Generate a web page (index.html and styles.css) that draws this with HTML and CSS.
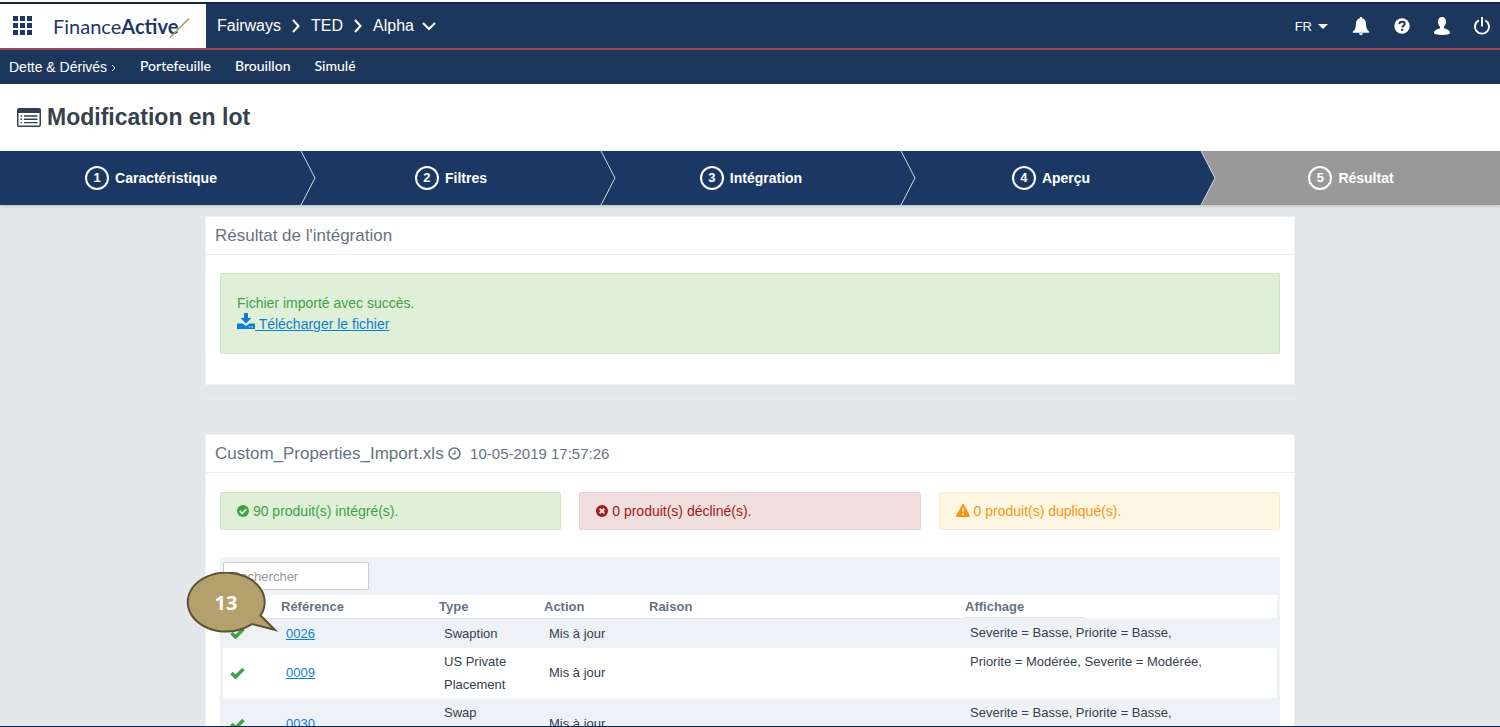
FILE: index.html
```html
<!DOCTYPE html>
<html lang="fr">
<head>
    <meta charset="UTF-8">
    <meta name="viewport" content="width=device-width, initial-scale=1.0">
    <title>Modification en lot</title>
    <link rel="stylesheet" href="styles.css">
</head>
<body>
    <!-- Barre principale -->
    <header class="topbar">
        <div class="brand">
            <button type="button" class="icon-btn" aria-label="Applications">
                <svg width="20" height="20" viewBox="0 0 20 20" fill="#1c3866">
                    <path d="M0 0h5v5H0zM7 0h5v5H7zM14 0h5v5h-5zM0 7h5v5H0zM7 7h5v5H7zM14 7h5v5h-5zM0 14h5v5H0zM7 14h5v5H7zM14 14h5v5h-5z"/>
                </svg>
            </button>
            <a href="#" class="logo">Finance<b>Active</b><svg class="slash" width="22" height="22" viewBox="0 0 22 22"><path d="M1 20.500L20 1.500" stroke="#b3a06c" stroke-width="1.700"/></svg></a>
        </div>
        <nav class="crumbs">
            <a href="#">Fairways</a>
            <svg width="8" height="14" viewBox="0 0 8 14"><path d="M1 1l5.500 6L1 13"/></svg>
            <a href="#">TED</a>
            <svg width="8" height="14" viewBox="0 0 8 14"><path d="M1 1l5.500 6L1 13"/></svg>
            <a href="#">Alpha</a>
            <svg class="down" width="14" height="10" viewBox="0 0 14 10"><path d="M1 2l6 6 6-6"/></svg>
        </nav>
        <div class="tools">
            <button type="button" class="lang">FR <span class="caret"></span></button>
            <button type="button" class="icon-btn" aria-label="Notifications">
                <svg width="18" height="18" viewBox="0 0 18 18" fill="#fff"><path d="M9 0c.8 0 1.200.5 1.200 1.200C12.800 1.800 14 4 14 6.500c0 4 1 6.500 3.200 8.200v1H.8v-1C3 13 4 10.500 4 6.500 4 4 5.200 1.800 7.800 1.200 7.800.5 8.200 0 9 0zM7 16.200h4c0 1.100-.9 1.800-2 1.800s-2-.7-2-1.800z"/></svg>
            </button>
            <button type="button" class="icon-btn" aria-label="Aide">
                <svg width="16" height="16" viewBox="0 0 16 16"><circle cx="8" cy="8" r="7.700" fill="#fff"/><path d="M5.400 6.100C5.500 4.500 6.500 3.700 8 3.700s2.700.9 2.700 2.200c0 1.800-2.500 1.800-2.500 3.600" fill="none" stroke="#1c3659" stroke-width="2"/><path d="M7.100 10.800h2.200v2H7.100z" fill="#1c3659"/></svg>
            </button>
            <button type="button" class="icon-btn" aria-label="Profil">
                <svg width="16" height="18" viewBox="0 0 16 18" fill="#fff"><path d="M8 0c2.500 0 4 1.900 4 4.800 0 2-.8 3.900-2 4.900v1.500c3.200 1 6 2.300 6 4.600 0 1.500-3.600 2.200-8 2.200s-8-.7-8-2.200c0-2.300 2.800-3.600 6-4.600V9.700C4.800 8.700 4 6.800 4 4.800 4 1.900 5.500 0 8 0z"/></svg>
            </button>
            <button type="button" class="icon-btn" aria-label="Déconnexion">
                <svg width="16" height="18" viewBox="0 0 16 18" fill="none" stroke="#fff" stroke-width="1.900"><path d="M4.800 3.400a7 7 0 1 0 6.400 0M8 0v9.500"/></svg>
            </button>
        </div>
    </header>

    <nav class="subnav">
        <a href="#" class="section">Dette &amp; Dérivés <svg width="5" height="8" viewBox="0 0 5 8"><path d="M1 1l3 3-3 3"/></svg></a>
        <a href="#">Portefeuille</a>
        <a href="#">Brouillon</a>
        <a href="#">Simulé</a>
    </nav>

    <div class="title">
        <svg width="24" height="19" viewBox="0 0 24 19"><path d="M2 0h20a2 2 0 0 1 2 2v15a2 2 0 0 1-2 2H2a2 2 0 0 1-2-2V2a2 2 0 0 1 2-2zM1.500 5v12c0 .3.200.5.500.5h20c.3 0 .5-.2.500-.5V5z" fill="#36414f" fill-rule="evenodd"/><path d="M3.500 8h1.500M3.500 11.300h1.500M3.500 14.600h1.500M7 8h13.500M7 11.300h13.500M7 14.600h13.500" stroke="#36414f" stroke-width="1.400"/></svg>
        <h1>Modification en lot</h1>
    </div>

    <!-- Étapes -->
    <ol class="steps">
        <li><span class="num">1</span>Caractéristique<svg class="arrow" width="16" height="54" viewBox="0 0 16 54"><path d="M0 0h1l14 27L1 54H0z" fill="#1b3864"/><path d="M1 0l14 27L1 54" fill="none" stroke="#d5dae2"/></svg></li>
        <li><span class="num">2</span>Filtres<svg class="arrow" width="16" height="54" viewBox="0 0 16 54"><path d="M0 0h1l14 27L1 54H0z" fill="#1b3864"/><path d="M1 0l14 27L1 54" fill="none" stroke="#d5dae2"/></svg></li>
        <li><span class="num">3</span>Intégration<svg class="arrow" width="16" height="54" viewBox="0 0 16 54"><path d="M0 0h1l14 27L1 54H0z" fill="#1b3864"/><path d="M1 0l14 27L1 54" fill="none" stroke="#d5dae2"/></svg></li>
        <li><span class="num">4</span>Aperçu<svg class="arrow" width="16" height="54" viewBox="0 0 16 54"><path d="M0 0h1l14 27L1 54H0z" fill="#1b3864"/><path d="M1 0l14 27L1 54" fill="none" stroke="#d5dae2"/></svg></li>
        <li class="current"><span class="num">5</span>Résultat</li>
    </ol>

    <main class="container">
        <section class="card">
            <h2>Résultat de l'intégration</h2>
            <div class="card-body">
                <div class="alert success big">
                    <p>Fichier importé avec succès.</p>
                    <a href="#" class="download"><svg width="18" height="16" viewBox="0 0 18 16" fill="#0d7fd2"><path d="M7 0h4v5h3.500L9 10.500 3.500 5H7zM0 10.500h5.500L9 13l3.500-2.500H18V16H0z"/><path d="M12 13.200h1.300v1.200H12zM14.700 13.200H16v1.200h-1.300z" fill="#dfefd8"/></svg> Télécharger le fichier</a>
                </div>
            </div>
        </section>

        <hr>

        <section class="card">
            <h2>Custom_Properties_Import.xls
                <svg width="13" height="13" viewBox="0 0 13 13" fill="none" stroke="#687282" stroke-width="1.500"><circle cx="6.500" cy="6.500" r="5.500"/><path d="M7 3.200v3.600H4.300" stroke-width="1.200"/></svg>
                <small>10-05-2019 17:57:26</small>
            </h2>
            <div class="card-body">
                <div class="summary">
                    <div class="alert success">
                        <svg width="12" height="12" viewBox="0 0 12 12"><circle cx="6" cy="6" r="6" fill="#3fa244"/><path d="M2.800 6l2.400 2.400 4.200-4.200" fill="none" stroke="#dfefd8" stroke-width="1.800"/></svg>
                        90 produit(s) intégré(s).
                    </div>
                    <div class="alert danger">
                        <svg width="12" height="12" viewBox="0 0 12 12"><circle cx="6" cy="6" r="6" fill="#9d1c1c"/><path d="M3.700 3.700l4.600 4.600M8.300 3.700L3.700 8.300" stroke="#f1dede" stroke-width="2"/></svg>
                        0 produit(s) décliné(s).
                    </div>
                    <div class="alert warning">
                        <svg width="14" height="13" viewBox="0 0 14 13"><path d="M7 0c.5 0 .8.2 1 .6l5.800 10.800c.4.800 0 1.600-.9 1.600H1.100c-.9 0-1.300-.8-.9-1.600L6 .6C6.200.2 6.500 0 7 0z" fill="#fb9610"/><path d="M6 4.200h2l-.3 4H6.300zM6.100 9.300h1.800V11H6.100z" fill="#fdf6e2"/></svg>
                        0 produit(s) dupliqué(s).
                    </div>
                </div>

                <div class="results">
                    <input type="text" placeholder="Rechercher" aria-label="Rechercher">
                    <table>
                        <colgroup>
                            <col class="c-state"><col class="c-ref"><col class="c-type"><col class="c-action"><col class="c-reason"><col>
                        </colgroup>
                        <thead>
                            <tr>
                                <th></th>
                                <th>Référence</th>
                                <th>Type</th>
                                <th>Action</th>
                                <th>Raison</th>
                                <th class="last"><div>Affichage</div></th>
                            </tr>
                        </thead>
                        <tbody>
                            <tr>
                                <td class="state"><svg width="15" height="12" viewBox="0 0 15 12"><path d="M1.500 6l4 4L13.500 2" /></svg></td>
                                <td><a href="#">0026</a></td>
                                <td>Swaption</td>
                                <td>Mis à jour</td>
                                <td></td>
                                <td class="display">Severite = Basse, Priorite = Basse,</td>
                            </tr>
                            <tr>
                                <td class="state"><svg width="15" height="12" viewBox="0 0 15 12"><path d="M1.500 6l4 4L13.500 2" /></svg></td>
                                <td><a href="#">0009</a></td>
                                <td>US Private Placement</td>
                                <td>Mis à jour</td>
                                <td></td>
                                <td class="display">Priorite = Modérée, Severite = Modérée,</td>
                            </tr>
                            <tr>
                                <td class="state"><svg width="15" height="12" viewBox="0 0 15 12"><path d="M1.500 6l4 4L13.500 2" /></svg></td>
                                <td><a href="#">0030</a></td>
                                <td>Swap<br>&nbsp;</td>
                                <td>Mis à jour</td>
                                <td></td>
                                <td class="display">Severite = Basse, Priorite = Basse,</td>
                            </tr>
                        </tbody>
                    </table>
                    <!-- Bulle de repère -->
                    <div class="callout">
                        <svg width="92" height="62" viewBox="0 0 92 62"><path d="M74.500 43.500L89 58 66 52A38.500 29.500 0 1 1 74.500 43.500z" fill="#b3a06c" stroke="#5e5132" stroke-width="2"/></svg>
                        <span>13</span>
                    </div>
                </div>
            </div>
        </section>
    </main>
</body>
</html>
```

FILE: styles.css
```css
* {
    box-sizing: border-box;
}
body {
    margin: 0;
    height: 100vh;
    overflow: hidden;
    padding-top: 2px;
    border-bottom: 1px solid #10264f;
    background: #fff;
    font-family: "Liberation Sans", Arial, sans-serif;
    font-size: 14px;
    color: #36414f;
    display: flex;
    flex-direction: column;
}
header, .subnav, .title, .steps {
    flex-shrink: 0;
}
a {
    color: #0d7fd2;
}
button {
    background: none;
    border: none;
    padding: 0;
    color: #fff;
    font-family: inherit;
    cursor: pointer;
}
.icon-btn svg {
    display: block;
}

/* header */
.topbar {
    display: flex;
    align-items: stretch;
    height: 48px;
    background: #1d375c;
    border-top: 2px solid #10264f;
    border-bottom: 2px solid #a04a59;
}
.brand {
    width: 206px;
    background: #fff;
    display: flex;
    align-items: center;
    gap: 20px;
    padding-left: 13px;
}
.logo {
    display: flex;
    align-items: center;
    font-family: Lato, sans-serif;
    font-size: 20px;
    color: #1c3866;
    text-decoration: none;
}
.slash {
    margin: 4px 0 0 -9px;
}
.crumbs {
    display: flex;
    align-items: center;
    gap: 11px;
    padding-left: 11px;
}
.crumbs a {
    color: #fff;
    font-size: 16px;
    text-decoration: none;
}
.crumbs svg {
    fill: none;
    stroke: #fff;
    stroke-width: 2;
}
.crumbs .down {
    margin-left: -3px;
}
.tools {
    margin-left: auto;
    display: flex;
    align-items: center;
    gap: 24px;
    padding-right: 10px;
}
.lang {
    display: flex;
    align-items: center;
    gap: 6px;
    font-size: 13px;
}
.caret {
    border: 5px solid transparent;
    border-top-color: #fff;
    border-bottom: none;
}
.subnav {
    display: flex;
    align-items: center;
    gap: 24px;
    height: 34px;
    padding-left: 9px;
    background: #1d375c;
}
.subnav a {
    padding-bottom: 4px;
    color: #fff;
    font-family: Lato, sans-serif;
    font-size: 14px;
    font-weight: 500;
    text-decoration: none;
}
.subnav .section {
    padding-bottom: 0;
    font-family: "Liberation Sans", Arial, sans-serif;
}
.subnav svg {
    fill: none;
    stroke: #fff;
}
.title {
    display: flex;
    align-items: center;
    gap: 6px;
    height: 67px;
    padding-left: 17px;
}
h1 {
    margin: 0;
    font-size: 23px;
}

/* steps */
.steps {
    position: relative;
    display: flex;
    margin: 0;
    padding: 0;
    list-style: none;
    background: #1b3864;
    box-shadow: 0 1px 3px rgba(0, 0, 0, 0.2);
}
.steps li {
    position: relative;
    flex: 1;
    height: 54px;
    display: flex;
    align-items: center;
    justify-content: center;
    gap: 6px;
    padding-left: 2px;
    color: #fff;
    font-weight: bold;
}
.steps .current {
    background: #999;
}
.num {
    width: 24px;
    height: 24px;
    border: 2px solid #fff;
    border-radius: 50%;
    line-height: 20px;
    text-align: center;
    font-size: 13px;
}
.arrow {
    position: absolute;
    left: 100%;
    top: 0;
    z-index: 1;
}

/* content */
.container {
    flex: 1;
    min-height: 0;
    overflow: hidden;
    background: #e4e8eb;
    padding: 11px calc((100% - 1090px) / 2) 0;
}
.card {
    background: #fff;
    border: 1px solid #eef1f5;
}
h2 {
    margin: 0;
    padding: 0 9px;
    height: 38px;
    line-height: 37px;
    border-bottom: 1px solid #eaeef1;
    font-size: 17px;
    font-weight: normal;
    color: #687282;
}
h2 svg {
    vertical-align: -1px;
}
h2 small {
    font-size: 15px;
    margin-left: 4px;
}
.card-body {
    padding: 18px 14px 30px;
}
hr {
    margin: 13px 0 35px;
    border: none;
    border-top: 1px solid #eaedf0;
}
.alert {
    border: 1px solid;
    border-radius: 2px;
    padding: 8px 16px;
    line-height: 20px;
}
.alert p {
    margin: 0;
}
.big {
    padding: 19px 16px;
}
.success {
    background: #dfefd8;
    border-color: #d0e6c1;
    color: #3fa244;
}
.danger {
    background: #f1dede;
    border-color: #ebcfd2;
    color: #9d1c1c;
}
.warning {
    background: #fdf6e2;
    border-color: #faebcc;
    color: #fb9610;
}
.summary {
    display: grid;
    grid-template-columns: repeat(3, 1fr);
    gap: 18px;
    margin: 1px 0 27px;
}
.summary svg {
    vertical-align: -1px;
}

/* table */
.results {
    position: relative;
    background: #eef1f6;
    padding: 5px 3px;
}
input {
    display: block;
    width: 146px;
    height: 28px;
    margin-bottom: 5px;
    padding: 0 7px;
    border: 1px solid #ccc;
    border-radius: 2px;
    font-family: inherit;
    font-size: 13px;
}
input::placeholder {
    color: #999;
}
table {
    width: 100%;
    table-layout: fixed;
    border-collapse: collapse;
    font-size: 13px;
    line-height: 23px;
}
.c-state {
    width: 58px;
}
.c-ref {
    width: 158px;
}
.c-type, .c-action {
    width: 105px;
}
.c-reason {
    width: 316px;
}
thead {
    background: #fff;
}
th {
    height: 23px;
    padding: 0;
    line-height: 21px;
    text-align: left;
    color: #687282;
    border-bottom: 1px solid #e4e4e4;
}
.last {
    border-bottom: none;
}
.last div {
    width: 120px;
    border-bottom: 1px solid #e4e4e4;
}
td {
    padding: 2px 24px 2px 5px;
}
tbody tr:nth-child(odd) td {
    padding-top: 3px;
    padding-bottom: 3px;
}
tbody tr:nth-child(even) {
    background: #fff;
}
.display {
    vertical-align: top;
}
.state {
    padding-left: 7px;
}
.state svg {
    display: block;
    fill: none;
    stroke: #3fa244;
    stroke-width: 3.500;
}
.callout {
    position: absolute;
    left: -34px;
    top: 15px;
}
.callout svg {
    display: block;
}
.callout span {
    position: absolute;
    left: 0;
    top: 0;
    width: 80px;
    line-height: 62px;
    text-align: center;
    font-family: "Noto Sans", sans-serif;
    font-size: 20px;
    font-weight: bold;
    color: #fff;
}
```
